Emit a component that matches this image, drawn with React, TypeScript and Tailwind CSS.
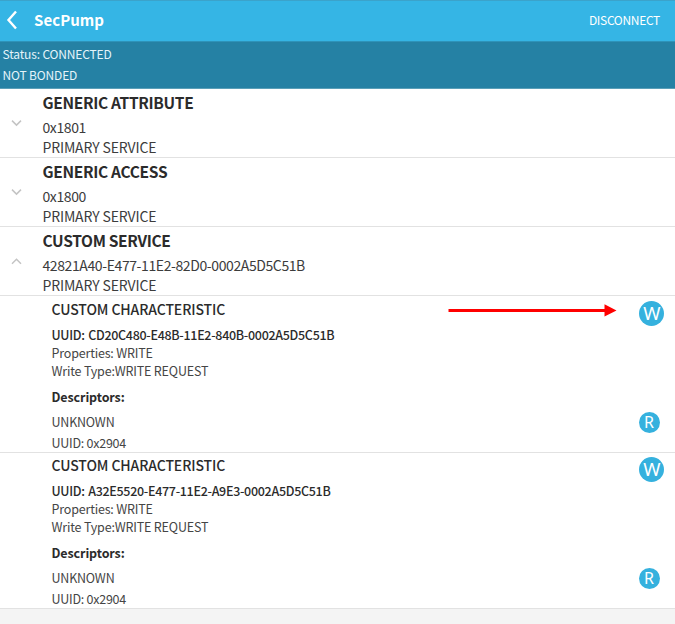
import React from "react";

type Service = { name: string; uuid: string; open: boolean };
type Characteristic = { uuid: string; last: boolean };

const services: Service[] = [
  { name: "GENERIC ATTRIBUTE", uuid: "0x1801", open: false },
  { name: "GENERIC ACCESS", uuid: "0x1800", open: false },
  { name: "CUSTOM SERVICE", uuid: "42821A40-E477-11E2-82D0-0002A5D5C51B", open: true },
];

const characteristics: Characteristic[] = [
  { uuid: "CD20C480-E48B-11E2-840B-0002A5D5C51B", last: false },
  { uuid: "A32E5520-E477-11E2-A9E3-0002A5D5C51B", last: true },
];

function ServiceRow({ name, uuid, open }: Service) {
  return (
    <section className="flex h-[69px] border-b border-[#e2e2e2]">
      <div className="w-[42.5px] shrink-0 pt-[29px] pl-[11px]">
        <svg width="11" height="10" viewBox="0 0 11 10" fill="none" stroke="#c4c4c4" strokeWidth="1.5">
          <path d={open ? "M1 7.8 5.5 3.3 10 7.8" : "M1 2.6 5.5 7.1 10 2.6"} />
        </svg>
      </div>
      <div className="pt-[3px] text-[#3c3c3c]">
        <h2 className="text-[15.5px] leading-[20px] font-bold tracking-[-0.32px] text-[#2b2b2b]">{name}</h2>
        <p className="mt-[5px] text-[14px] leading-[20px] tracking-[-0.4px]">{uuid}</p>
        <p className="text-[14px] leading-[20px] tracking-[-0.15px]">PRIMARY SERVICE</p>
      </div>
    </section>
  );
}

function CharacteristicRow({ uuid, last }: Characteristic) {
  return (
    <section
      className={
        last
          ? "flex h-[156px] justify-between border-b border-[#e2e2e2] pl-[51.5px]"
          : "flex h-[157px] justify-between border-b border-[#e2e2e2] pl-[51.5px] pt-px"
      }
    >
      <div className="text-[12.5px] tracking-[-0.18px] text-[#454545]">
        <h3 className="mt-[2px] text-[14px] leading-[20px] font-medium tracking-[-0.1px] text-[#2b2b2b]">
          CUSTOM CHARACTERISTIC
        </h3>
        <p className="mt-[7px] leading-[18px] font-medium tracking-[-0.3px] [word-spacing:1px] text-[#2b2b2b]">
          UUID: {uuid}
        </p>
        <p className="leading-[18px]">Properties: WRITE</p>
        <p className="leading-[17px]">Write Type:WRITE REQUEST</p>
        <p className="mt-[8px] leading-[19px] font-bold tracking-[-0.1px] text-[#2b2b2b]">Descriptors:</p>
        <p className="mt-[6px] leading-[20px] tracking-[-0.2px]">UNKNOWN</p>
        <p className="mt-px leading-[20px] tracking-[-0.25px]">UUID: 0x2904</p>
      </div>
      {!last && (
        <svg className="mt-[6px] ml-auto mr-[23px]" width="169" height="14" viewBox="0 0 169 14" fill="#ff0000">
          <path d="M0.5 6h156V1.300L168.500 7.500 156.500 13.600V9H0.500z" />
        </svg>
      )}
      <div className="flex w-[35px] shrink-0 flex-col font-['Noto_Sans',sans-serif] text-white">
        <button className="mt-[4px] -ml-[0.7px] flex size-[25px] items-center justify-center rounded-full bg-[#35b1de] text-[18.5px] leading-[24px]">
          <span className="-mt-px">W</span>
        </button>
        <button className="mt-[86px] -ml-[1.5px] flex size-[21px] items-center justify-center rounded-full bg-[#35b1de] pb-px text-[16px] leading-none">
          R
        </button>
      </div>
    </section>
  );
}

export default function App() {
  return (
    <main className="min-h-[624px] w-[675px] bg-[#f4f4f4] font-['Noto_Sans_CJK_SC',sans-serif] whitespace-nowrap">
      <header className="flex h-[41px] items-center border-t border-[#3ba3cb] bg-[#35b5e5] pr-[15px] pb-[2px] pl-[6px] text-white">
        <svg width="12" height="20" viewBox="0 0 12 20" fill="none" stroke="white" strokeWidth="2.4">
          <path d="M10 1.500 2.500 10 10 18.500" />
        </svg>
        <h1 className="mb-px ml-[16px] text-[15px] leading-[20px] font-bold tracking-[0.05px]">SecPump</h1>
        <button className="mb-px ml-auto text-[12px] leading-[20px] tracking-[-0.3px]">DISCONNECT</button>
      </header>
      <div className="h-[48px] border-t border-b border-t-[#2e93b9] border-b-[#5a9fb8] bg-[#2581a4] pt-px pl-[2.5px] text-[12px] tracking-[-0.15px] text-[#e4f4fa]">
        <p className="leading-[21px]">Status: CONNECTED</p>
        <p className="leading-[22px]">NOT BONDED</p>
      </div>
      <div className="bg-white">
        {services.map((s) => (
          <ServiceRow key={s.name} {...s} />
        ))}
        {characteristics.map((c) => (
          <CharacteristicRow key={c.uuid} {...c} />
        ))}
      </div>
    </main>
  );
}
